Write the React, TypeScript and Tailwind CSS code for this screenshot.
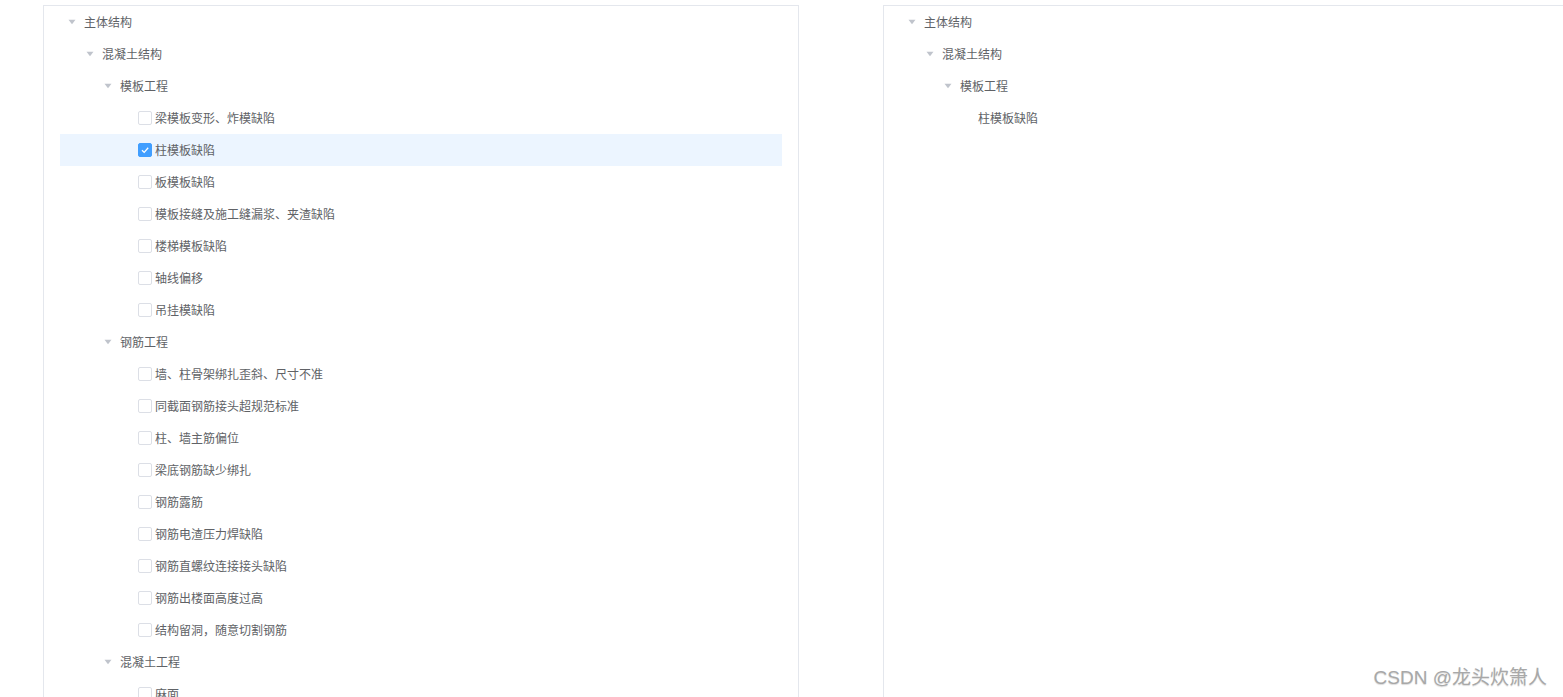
import React from 'react'

type Node = { label: string; level: number; leaf?: boolean; checked?: boolean }

const leftTree: Node[] = [
  { label: '主体结构', level: 0 },
  { label: '混凝土结构', level: 1 },
  { label: '模板工程', level: 2 },
  { label: '梁模板变形、炸模缺陷', level: 3, leaf: true },
  { label: '柱模板缺陷', level: 3, leaf: true, checked: true },
  { label: '板模板缺陷', level: 3, leaf: true },
  { label: '模板接缝及施工缝漏浆、夹渣缺陷', level: 3, leaf: true },
  { label: '楼梯模板缺陷', level: 3, leaf: true },
  { label: '轴线偏移', level: 3, leaf: true },
  { label: '吊挂模缺陷', level: 3, leaf: true },
  { label: '钢筋工程', level: 2 },
  { label: '墙、柱骨架绑扎歪斜、尺寸不准', level: 3, leaf: true },
  { label: '同截面钢筋接头超规范标准', level: 3, leaf: true },
  { label: '柱、墙主筋偏位', level: 3, leaf: true },
  { label: '梁底钢筋缺少绑扎', level: 3, leaf: true },
  { label: '钢筋露筋', level: 3, leaf: true },
  { label: '钢筋电渣压力焊缺陷', level: 3, leaf: true },
  { label: '钢筋直螺纹连接接头缺陷', level: 3, leaf: true },
  { label: '钢筋出楼面高度过高', level: 3, leaf: true },
  { label: '结构留洞，随意切割钢筋', level: 3, leaf: true },
  { label: '混凝土工程', level: 2 },
  { label: '麻面', level: 3, leaf: true },
]

const rightTree: Node[] = [
  { label: '主体结构', level: 0 },
  { label: '混凝土结构', level: 1 },
  { label: '模板工程', level: 2 },
  { label: '柱模板缺陷', level: 3, leaf: true },
]

const indent = ['pl-0', 'pl-[18px]', 'pl-[36px]', 'pl-[54px]']

function Caret() {
  return (
    <svg width="8" height="6" viewBox="0 0 8 6" className="block">
      <path d="M0.5 0.8 L7.5 0.8 L4 5.2 Z" fill="#c0c4cc" />
    </svg>
  )
}

function Checkbox({ checked }: { checked?: boolean }) {
  return checked ? (
    <span className="block w-[14px] h-[14px] rounded-[2px] bg-[#409eff] border border-[#409eff] flex items-center justify-center shrink-0">
      <svg width="10" height="10" viewBox="0 0 10 10" className="block">
        <path d="M2 5.2 L4.2 7.4 L8.2 2.8" stroke="#fff" strokeWidth="1.3" fill="none" />
      </svg>
    </span>
  ) : (
    <span className="block w-[14px] h-[14px] rounded-[2px] bg-white border border-[#dcdfe6] shrink-0" />
  )
}

function Tree({ nodes, showCheck }: { nodes: Node[]; showCheck?: boolean }) {
  return (
    <div>
      {nodes.map((n, i) => (
        <div
          key={i}
          className={`h-8 flex items-center ${indent[n.level]} ${n.checked && showCheck ? 'bg-[#ecf5ff]' : ''}`}
        >
          <span className="w-6 h-6 flex items-center justify-center shrink-0">
            {!n.leaf && <Caret />}
          </span>
          {showCheck && n.leaf && (
            <span className="block mr-[3px] shrink-0">
              <Checkbox checked={n.checked} />
            </span>
          )}
          <span className="text-[12px] text-[#606266] leading-none whitespace-nowrap pt-[2px]">{n.label}</span>
        </div>
      ))}
    </div>
  )
}

export default function App() {
  return (
    <div
      className="relative h-[697px] overflow-hidden bg-white"
      style={{ fontFamily: '"Liberation Sans", "Noto Sans CJK SC", sans-serif' }}
    >
      <div className="flex gap-[84px] pl-[43px] pt-[5px]">
        <div className="w-[756px] h-[760px] border border-[#e4e7ed] px-4 shrink-0">
          <Tree nodes={leftTree} showCheck />
        </div>
        <div className="w-[756px] h-[760px] border border-[#e4e7ed] px-4 shrink-0">
          <Tree nodes={rightTree} />
        </div>
      </div>
      <div className="absolute right-[16px] bottom-[5px] text-[19px] text-[#a8a8a8] [text-shadow:0_1px_1px_rgba(0,0,0,0.15)]">
        CSDN @龙头炊箫人
      </div>
    </div>
  )
}
